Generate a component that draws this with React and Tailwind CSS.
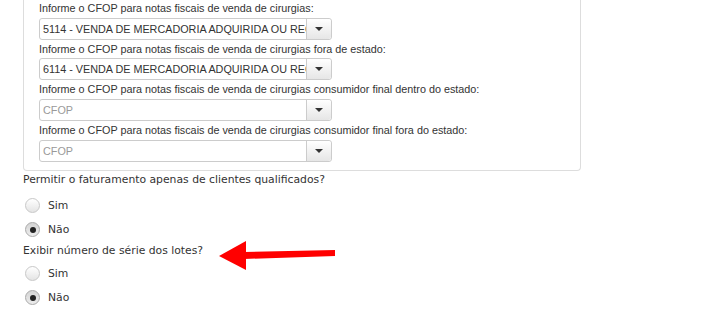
const cfopFields = [
  { label: "Informe o CFOP para notas fiscais de venda de cirurgias:", value: "5114 - VENDA DE MERCADORIA ADQUIRIDA OU RECEBIDA DE TERCEIROS" },
  { label: "Informe o CFOP para notas fiscais de venda de cirurgias fora de estado:", value: "6114 - VENDA DE MERCADORIA ADQUIRIDA OU RECEBIDA DE TERCEIROS" },
  { label: "Informe o CFOP para notas fiscais de venda de cirurgias consumidor final dentro do estado:", value: null },
  { label: "Informe o CFOP para notas fiscais de venda de cirurgias consumidor final fora do estado:", value: null },
];

const questions = [
  { label: "Permitir o faturamento apenas de clientes qualificados?", value: "nao", gap: "mt-[5px]" },
  { label: "Exibir número de série dos lotes?", value: "nao", gap: "mt-[2px]" },
];

export default function App() {
  return (
    <div className="relative h-[312px] w-[725px] overflow-hidden bg-white">
      <section className="-mt-[1px] ml-[23px] w-[558px] rounded-b-[4px] border border-t-0 border-[#dddddd] pb-[8px] pl-[15px] font-['Liberation_Sans',Arial,sans-serif]">
        {cfopFields.map((field) => (
          <div key={field.label}>
            <p className="h-[18.7px] text-[10.8px] leading-[19px] text-[#333]">{field.label}</p>
            <CfopSelect value={field.value} />
          </div>
        ))}
      </section>

      <div className="pl-[23px] font-['DejaVu_Sans',Verdana,sans-serif] text-[10.8px] text-[#333]">
        {questions.map((q) => (
          <div key={q.label}>
            <p className="h-[18px] leading-[18px]">{q.label}</p>
            <div className={q.gap}>
              <Radio label="Sim" checked={q.value === "sim"} />
              <Radio label="Não" checked={q.value === "nao"} />
            </div>
          </div>
        ))}
      </div>

      {/* red annotation arrow */}
      <svg className="absolute left-[215px] top-[238px]" width="125" height="36" viewBox="0 0 125 36">
        <polygon points="4,18 31,3 31,32" fill="#ff0000" />
        <polygon points="29,14 120,12 120,18 29,21" fill="#ff0000" />
      </svg>
    </div>
  );
}

function CfopSelect({ value }) {
  return (
    <div className="flex h-[22px] w-[293px] rounded-[3px] border border-[#cccccc] bg-white">
      <div
        className={`flex-1 overflow-hidden whitespace-nowrap pl-[3px] text-[10.8px] leading-[20px] ${
          value ? "text-[#333]" : "text-[#999]"
        }`}
      >
        {value || "CFOP"}
      </div>
      <div className="flex w-[25px] items-center justify-center rounded-r-[3px] border-l border-[#cccccc] bg-linear-to-b from-white to-[#e6e6e6]">
        <span className="h-0 w-0 border-x-[4px] border-t-[4px] border-x-transparent border-t-[#333]" />
      </div>
    </div>
  );
}

function Radio({ label, checked }) {
  return (
    <div className="flex h-[24px] items-center gap-[8px] pl-[2px]">
      <span
        className={`flex h-[15px] w-[15px] items-center justify-center rounded-full border ${
          checked
            ? "border-[#aaaaaa] bg-linear-to-b from-[#d4d4d4] to-[#ececec]"
            : "border-[#c8c8c8] bg-linear-to-b from-white to-[#e4e4e4]"
        }`}
      >
        {checked && <span className="h-[6px] w-[6px] rounded-full bg-[#222]" />}
      </span>
      <span>{label}</span>
    </div>
  );
}
